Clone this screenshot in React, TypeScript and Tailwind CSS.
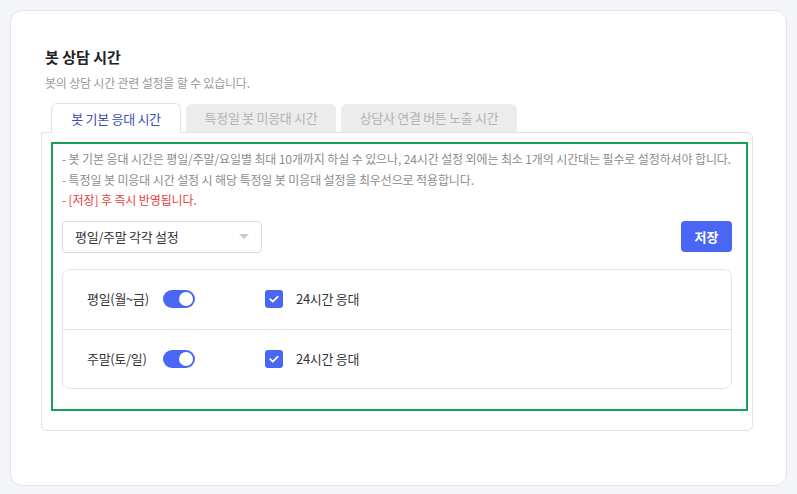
import React, { useState } from 'react';

const tabs = ['봇 기본 응대 시간', '특정일 봇 미응대 시간', '상담사 연결 버튼 노출 시간'];

const days = [
  { label: '평일(월~금)', on: true, allDay: true },
  { label: '주말(토/일)', on: true, allDay: true },
];

const Toggle = ({ on }: { on: boolean }) => (
  <div className={`flex h-[18px] w-[32px] items-center rounded-full px-[2px] ${on ? 'justify-end bg-[#4a66f4]' : 'justify-start bg-gray-300'}`}>
    <div className="h-[14px] w-[14px] rounded-full bg-white" />
  </div>
);

const Check = ({ checked }: { checked: boolean }) => (
  <div className={`flex h-[18px] w-[18px] items-center justify-center rounded-[3px] ${checked ? 'bg-[#4a66f4]' : 'border border-gray-300 bg-white'}`}>
    {checked && (
      <svg width="12" height="12" viewBox="0 0 12 12" fill="none">
        <path d="M2.2 6.2L4.8 8.7L9.8 3.6" stroke="white" strokeWidth="1.8" strokeLinecap="round" strokeLinejoin="round" />
      </svg>
    )}
  </div>
);

export default function App() {
  const [active, setActive] = useState(0);

  return (
    <div className="min-h-screen bg-[#f4f5f9] p-[10px] font-['Noto_Sans_CJK_KR','Noto_Sans',sans-serif]">
      <div className="h-[476px] rounded-[12px] border border-[#e4e5ea] bg-white pl-[30px] pr-[30px] pt-[36px]">
        <h2 className="ml-[4px] text-[15px] font-bold leading-[20px] text-[#222]">봇 상담 시간</h2>
        <p className="ml-[4px] mt-[7px] text-[12px] leading-[18px] tracking-[-0.2px] text-[#9a9a9a]">봇의 상담 시간 관련 설정을 할 수 있습니다.</p>

        <div className="relative z-10 mt-[11px] flex items-end gap-[5px] pl-[10px]">
          {tabs.map((t, i) =>
            i === active ? (
              <button
                key={t}
                onClick={() => setActive(i)}
                className="-mb-px h-[30px] w-[130px] rounded-t-[6px] border border-b-0 border-[#e2e2e2] bg-white text-[13px] tracking-[-0.3px] text-[#3d4db7]"
              >
                {t}
              </button>
            ) : (
              <button
                key={t}
                onClick={() => setActive(i)}
                className={`h-[28px] rounded-t-[6px] bg-[#ececec] text-[13px] tracking-[-0.3px] text-[#b3b3b3] ${i === 1 ? 'w-[150px]' : 'w-[176px]'}`}
              >
                {t}
              </button>
            )
          )}
        </div>

        <div className="w-[712px] rounded-b-[6px] rounded-tr-[6px] border border-[#e2e2e2] pb-[19px] pl-[9px] pr-[4px] pt-[9px]">
          <div className="border-2 border-[#17a05a] pb-[20px] pl-[9px] pr-[14px] pt-[5px]">
            <div className="whitespace-nowrap text-[12px] leading-[20.5px] tracking-[-0.12px] text-[#8c8c8c]">
              <p>- 봇 기본 응대 시간은 평일/주말/요일별 최대 10개까지 하실 수 있으나, 24시간 설정 외에는 최소 1개의 시간대는 필수로 설정하셔야 합니다.</p>
              <p>- 특정일 봇 미응대 시간 설정 시 해당 특정일 봇 미응대 설정을 최우선으로 적용합니다.</p>
              <p className="text-[#e5413b]">- [저장] 후 즉시 반영됩니다.</p>
            </div>

            <div className="mt-[10px] flex items-center justify-between">
              <div className="flex h-[32px] w-[200px] items-center justify-between rounded-[4px] border border-[#dcdcdc] pl-[12px] pr-[12px]">
                <span className="text-[13px] tracking-[-0.3px] text-[#333]">평일/주말 각각 설정</span>
                <svg width="10" height="6" viewBox="0 0 10 6">
                  <path d="M0 0H10L5 5Z" fill="#c8c8c8" />
                </svg>
              </div>
              <button className="h-[31px] w-[51px] rounded-[4px] bg-[#4a66f4] text-[13px] font-bold text-white">저장</button>
            </div>

            <div className="mt-[16px] rounded-[8px] border border-[#e4e4e4]">
              {days.map((d, i) => (
                <div
                  key={d.label}
                  className={`flex h-[59px] items-center pl-[24px] ${i > 0 ? 'border-t border-[#e4e4e4]' : ''}`}
                >
                  <span className="w-[76px] text-[13px] tracking-[-0.3px] text-[#333]">{d.label}</span>
                  <Toggle on={d.on} />
                  <div className="ml-[70px] flex items-center gap-[13px]">
                    <Check checked={d.allDay} />
                    <span className="text-[13px] tracking-[-0.3px] text-[#333]">24시간 응대</span>
                  </div>
                </div>
              ))}
            </div>
          </div>
        </div>
      </div>
    </div>
  );
}
